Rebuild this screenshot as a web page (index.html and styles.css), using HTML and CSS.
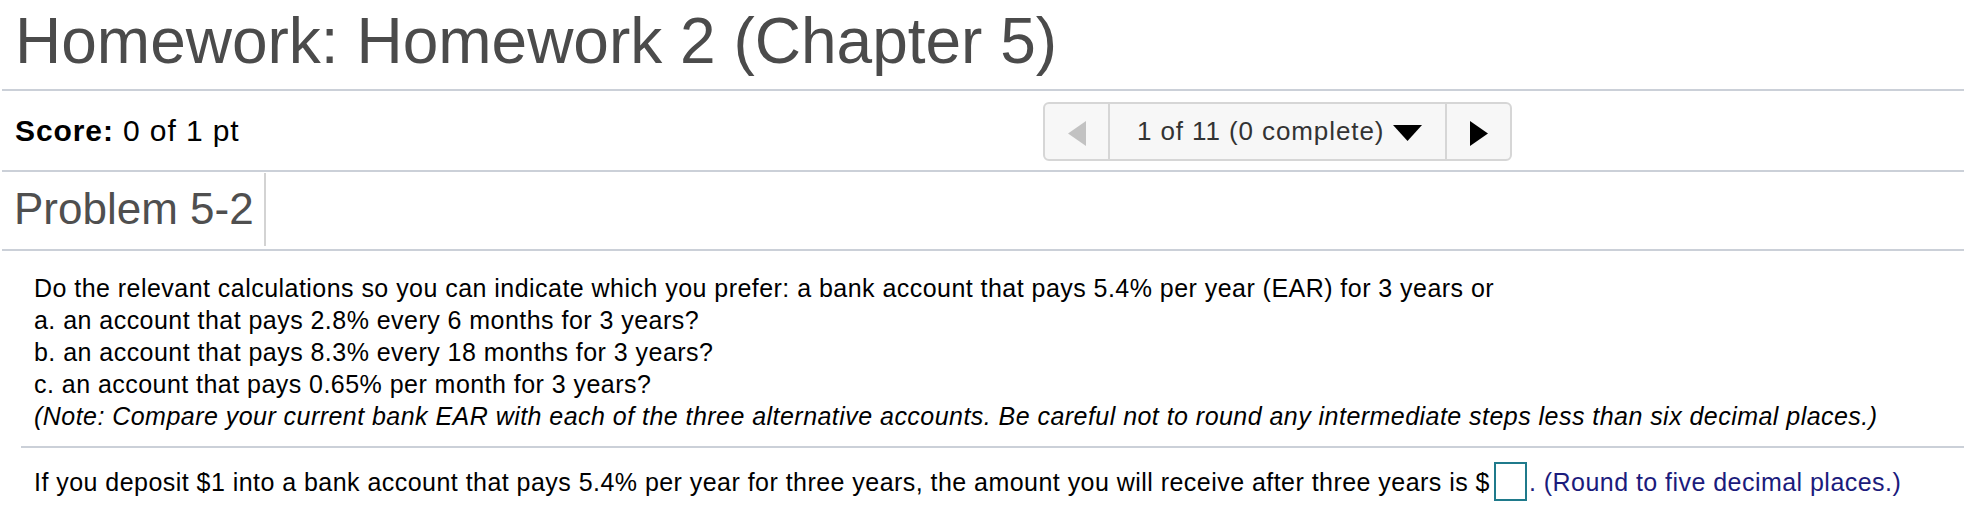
FILE: index.html
```html
<!DOCTYPE html>
<html lang="en">
<head>
<meta charset="utf-8">
<title>Homework: Homework 2 (Chapter 5)</title>
<link rel="stylesheet" href="styles.css">
</head>
<body>
<div class="page">
  <h1 class="title">Homework: Homework 2 (Chapter 5)</h1>

  <div class="score-row">
    <div class="score"><b>Score:</b> 0 of 1 pt</div>
    <div class="nav">
      <div class="nav-btn nav-prev">
        <svg width="18" height="25" viewBox="0 0 18 25"><polygon points="18,0 18,25 0,12.5" fill="#c2c2c2"/></svg>
      </div>
      <div class="nav-mid">
        <span class="nav-text">1 of 11 (0 complete)</span>
        <svg class="nav-down" width="29" height="16" viewBox="0 0 29 16"><polygon points="0,0 29,0 14.5,16" fill="#000"/></svg>
      </div>
      <div class="nav-btn nav-next">
        <svg width="18" height="25" viewBox="0 0 18 25"><polygon points="0,0 18,12.5 0,25" fill="#000"/></svg>
      </div>
    </div>
  </div>

  <div class="problem-row">
    <h2 class="problem">Problem 5-2</h2>
  </div>

  <div class="content">
    <p class="question">Do the relevant calculations so you can indicate which you prefer: a bank account that pays 5.4% per year (EAR) for 3 years or<br>
    a. an account that pays 2.8% every 6 months for 3 years?<br>
    b. an account that pays 8.3% every 18 months for 3 years?<br>
    c. an account that pays 0.65% per month for 3 years?<br>
    <em>(Note: Compare your current bank EAR with each of the three alternative accounts. Be careful not to round any intermediate steps less than six decimal places.)</em></p>

    <div class="answer">
      <p class="answer-line">If you deposit $1 into a bank account that pays 5.4% per year for three years, the amount you will receive after three years is $<span class="answer-box"></span><span class="hint">. (Round to five decimal places.)</span></p>
    </div>
  </div>
</div>
</body>
</html>
```

FILE: styles.css
```css
html, body {
  margin: 0;
  padding: 0;
  background: #ffffff;
}

body {
  font-family: "Liberation Sans", Arial, sans-serif;
  color: #000;
}

.page {
  margin-left: 2px;
}

.title {
  margin: 0;
  height: 91px;
  box-sizing: border-box;
  padding: 5px 0 0 13px;
  font-size: 64px;
  line-height: 72px;
  font-weight: normal;
  color: #4b4b4b;
  white-space: nowrap;
  border-bottom: 2px solid #cbd0d8;
}

.score-row {
  display: grid;
  grid-template-columns: 1041px auto;
  align-items: center;
  height: 81px;
  box-sizing: border-box;
  border-bottom: 2px solid #cbd0d8;
}

.score {
  padding-left: 13px;
  font-size: 30px;
  line-height: 34px;
  letter-spacing: 0.9px;
  white-space: nowrap;
}

.score b {
  font-weight: bold;
}

.nav {
  display: flex;
  width: 469px;
  height: 59px;
  box-sizing: border-box;
  border: 2px solid #d6d6d6;
  border-radius: 6px;
  background: #f7f7f7;
  margin-top: 2px;
}

.nav-btn {
  width: 65px;
  display: flex;
  align-items: center;
  justify-content: center;
  padding-top: 4px;
  box-sizing: border-box;
}

.nav-prev {
  border-right: 2px solid #d6d6d6;
}

.nav-next {
  border-left: 2px solid #d6d6d6;
}

.nav-mid {
  flex: 1;
  display: flex;
  align-items: center;
  gap: 9px;
  padding-left: 27px;
  font-size: 26px;
  letter-spacing: 0.9px;
  color: #333;
  white-space: nowrap;
}

.nav-down {
  margin-top: 2px;
}

.problem-row {
  height: 79px;
  box-sizing: border-box;
  border-bottom: 2px solid #cbd0d8;
}

.problem {
  display: inline-block;
  margin: 1px 0 0 0;
  height: 73px;
  box-sizing: border-box;
  padding: 11px 10px 0 12px;
  font-size: 44px;
  line-height: 50px;
  font-weight: normal;
  color: #4f4f4f;
  border-right: 2px solid #d3d3d3;
  white-space: nowrap;
}

.content {
  font-size: 25px;
  letter-spacing: 0.46px;
  line-height: 32px;
}

.question {
  margin: 21px 0 0 0;
  padding-left: 32px;
  white-space: nowrap;
}

.question em {
  font-style: italic;
}

.answer {
  margin: 14px 0 0 19px;
  border-top: 2px solid #cbd0d8;
  padding: 14px 0 0 13px;
}

.answer-line {
  margin: 0;
  white-space: nowrap;
}

.answer-box {
  display: inline-block;
  width: 33px;
  height: 39px;
  box-sizing: border-box;
  border: 2px solid #1f7a8b;
  background: #fff;
  vertical-align: -10px;
  margin: 0 2px 0 4px;
}

.hint {
  color: #1b1b7c;
}
```
